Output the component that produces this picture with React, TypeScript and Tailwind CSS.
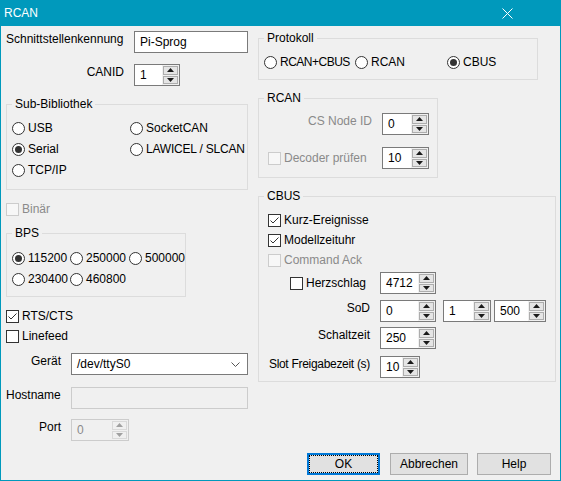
import React from 'react';

const FONT = "font-['Liberation_Sans',Arial,sans-serif]";
const GRAY = 'text-[#8a8a8a]';

type RadioProps = { label: string; checked?: boolean; className?: string; textClass?: string };

const Radio: React.FC<RadioProps> = ({ label, checked, className = '', textClass = '' }) => (
  <div className={`flex items-center gap-[3px] whitespace-nowrap ${className}`}>
    <span className="w-[13px] h-[13px] shrink-0 rounded-full border border-[#333333] bg-white flex items-center justify-center">
      {checked && <span className="w-[7px] h-[7px] rounded-full bg-[#333333]" />}
    </span>
    <span className={textClass}>{label}</span>
  </div>
);

type CheckProps = { label: string; checked?: boolean; disabled?: boolean; className?: string };

const Check: React.FC<CheckProps> = ({ label, checked, disabled, className = '' }) => (
  <div className={`flex items-center gap-[3px] whitespace-nowrap ${className}`}>
    <span
      className={`w-[13px] h-[13px] shrink-0 border flex items-center justify-center ${
        disabled ? 'border-[#cccccc] bg-[#f7f7f7]' : 'border-[#333333] bg-white'
      }`}
    >
      {checked && (
        <svg width="11" height="11" viewBox="0 0 11 11">
          <polyline points="1.5,5.5 4,8 9.5,2.5" fill="none" stroke="#333333" strokeWidth="1" />
        </svg>
      )}
    </span>
    <span className={disabled ? GRAY : ''}>{label}</span>
  </div>
);

const Arrow: React.FC<{ up?: boolean; disabled?: boolean }> = ({ up, disabled }) => (
  <svg width="7" height="4" viewBox="0 0 7 4">
    <polygon
      points={up ? '3.5,0 7,4 0,4' : '0,0 7,0 3.5,4'}
      fill={disabled ? '#a0a0a0' : '#1a1a1a'}
    />
  </svg>
);

type SpinProps = { value: string; className: string; disabled?: boolean };

const Spin: React.FC<SpinProps> = ({ value, className, disabled }) => (
  <div
    className={`h-[22px] flex border ${
      disabled ? 'border-[#cccccc] bg-[#f0f0f0]' : 'border-[#7a7a7a] bg-white'
    } ${className}`}
  >
    <div className={`flex-1 flex items-center pl-[5px] ${disabled ? GRAY : ''}`}>{value}</div>
    <div className="w-[17px] flex flex-col gap-[1px] p-[1px] bg-[#f0f0f0]">
      <div
        className={`flex-1 flex items-center justify-center border ${
          disabled ? 'border-[#d9d9d9] bg-[#f0f0f0]' : 'border-[#adadad] bg-[#e5e5e5]'
        }`}
      >
        <Arrow up disabled={disabled} />
      </div>
      <div
        className={`flex-1 flex items-center justify-center border ${
          disabled ? 'border-[#d9d9d9] bg-[#f0f0f0]' : 'border-[#adadad] bg-[#e5e5e5]'
        }`}
      >
        <Arrow disabled={disabled} />
      </div>
    </div>
  </div>
);

const Group: React.FC<{ title: string; className: string; children: React.ReactNode }> = ({
  title,
  className,
  children,
}) => (
  <fieldset className={`border border-[#dcdcdc] ${className}`}>
    <legend className="ml-[5px] px-[3px] leading-[14px]">{title}</legend>
    {children}
  </fieldset>
);

const Button: React.FC<{ label: string; className: string; focused?: boolean }> = ({
  label,
  className,
  focused,
}) =>
  focused ? (
    <button className={`h-[22px] border-2 border-[#0078d7] bg-[#e1e1e1] p-0 ${className}`}>
      <span className="flex h-full w-full items-center justify-center border border-dotted border-black">
        {label}
      </span>
    </button>
  ) : (
    <button className={`h-[22px] border border-[#adadad] bg-[#e1e1e1] flex items-center justify-center ${className}`}>
      {label}
    </button>
  );

export default function App() {
  return (
    <div
      className={`w-[561px] h-[481px] border border-[#0099bc] bg-[#f0f0f0] text-[12px] leading-[15px] text-black flex flex-col ${FONT}`}
    >
      {/* Title bar */}
      <div className="h-[25px] shrink-0 bg-[#0099bc] flex items-center justify-between pl-[3px] pr-[47px] text-white">
        <span>RCAN</span>
        <svg width="11" height="11" viewBox="0 0 11 11">
          <line x1="0.5" y1="0.5" x2="10.5" y2="10.5" stroke="white" strokeWidth="1" />
          <line x1="10.5" y1="0.5" x2="0.5" y2="10.5" stroke="white" strokeWidth="1" />
        </svg>
      </div>

      <div className="flex-1 flex flex-col pl-[5px] pr-[4px]">
        <div className="flex gap-[10px]">
          {/* Left column */}
          <div className="w-[242px] flex flex-col">
            <div className="mt-[5px] flex items-start justify-between">
              <span className="pt-[1px]">Schnittstellenkennung</span>
              <div className="w-[114px] h-[22px] border border-[#7a7a7a] bg-white flex items-center pl-[5px]">
                Pi-Sprog
              </div>
            </div>

            <div className="mt-[11px] flex items-start">
              <span className="w-[118px] text-right pt-[1px]">CANID</span>
              <Spin value="1" className="ml-[10px] w-[46px]" />
            </div>

            <Group title="Sub-Bibliothek" className="mt-[11px] w-[242px]">
              <div className="flex pt-[7px] pb-[8px] pl-[5px]">
                <div className="w-[118px] flex flex-col">
                  <Radio label="USB" className="h-[21px]" />
                  <Radio label="Serial" checked className="h-[21px]" />
                  <Radio label="TCP/IP" className="h-[21px]" />
                </div>
                <div className="flex flex-col">
                  <Radio label="SocketCAN" className="h-[21px]" />
                  <Radio label="LAWICEL / SLCAN" className="h-[21px]" textClass="tracking-[-0.2px]" />
                </div>
              </div>
            </Group>

            <Check label="Binär" disabled className="mt-[12px] h-[14px]" />

            <Group title="BPS" className="mt-[10px] w-[180px]">
              <div className="flex flex-col pt-[8px] pb-[6px] pl-[5px]">
                <div className="flex h-[21px]">
                  <Radio label="115200" checked className="w-[58px]" />
                  <Radio label="250000" className="w-[59px]" />
                  <Radio label="500000" />
                </div>
                <div className="flex h-[21px]">
                  <Radio label="230400" className="w-[58px]" />
                  <Radio label="460800" />
                </div>
              </div>
            </Group>

            <Check label="RTS/CTS" checked className="mt-[12px] h-[14px]" />
            <Check label="Linefeed" className="mt-[6px] h-[14px]" />

            <div className="mt-[10px] flex items-start">
              <span className="w-[55px] text-right pt-[1px]">Gerät</span>
              <div className="ml-[10px] w-[177px] h-[22px] border border-[#7a7a7a] bg-white flex items-center justify-between pl-[5px] pr-[7px]">
                <span>/dev/ttyS0</span>
                <svg width="9" height="5" viewBox="0 0 9 5">
                  <polyline points="0.5,0.5 4.5,4.5 8.5,0.5" fill="none" stroke="#555555" strokeWidth="1" />
                </svg>
              </div>
            </div>

            <div className="mt-[12px] flex items-start">
              <span className="w-[65px] pt-[1px]">Hostname</span>
              <div className="w-[177px] h-[22px] border border-[#cccccc] bg-[#f0f0f0]" />
            </div>

            <div className="mt-[10px] flex items-start">
              <span className="w-[55px] text-right pt-[1px]">Port</span>
              <Spin value="0" disabled className="ml-[10px] w-[58px]" />
            </div>
          </div>

          {/* Right column */}
          <div className="w-[298px] flex flex-col">
            <Group title="Protokoll" className="mt-[5px] w-[280px]">
              <div className="flex h-[21px] mt-[7px] mb-[6px] pl-[5px]">
                <Radio label="RCAN+CBUS" className="w-[91px]" textClass="tracking-[-0.5px]" />
                <Radio label="RCAN" className="w-[92px]" />
                <Radio label="CBUS" checked />
              </div>
            </Group>

            <Group title="RCAN" className="mt-[11px] w-[180px]">
              <div className="flex flex-col pt-[8px] pb-[8px] pl-[9px]">
                <div className="flex items-start">
                  <span className={`w-[104px] text-right pt-[1px] ${GRAY}`}>CS Node ID</span>
                  <Spin value="0" className="ml-[10px] w-[47px]" />
                </div>
                <div className="mt-[12px] flex items-center">
                  <Check label="Decoder prüfen" disabled className="w-[104px]" />
                  <Spin value="10" className="ml-[10px] w-[47px]" />
                </div>
              </div>
            </Group>

            <Group title="CBUS" className="mt-[11px] w-[298px]">
              <div className="flex flex-col pt-[7px] pb-[3px] pl-[9px]">
                <Check label="Kurz-Ereignisse" checked className="h-[20px]" />
                <Check label="Modellzeituhr" checked className="h-[20px]" />
                <Check label="Command Ack" disabled className="h-[20px]" />

                <div className="mt-[2px] flex items-center">
                  <Check label="Herzschlag" className="w-[102px] pl-[22px]" />
                  <Spin value="4712" className="ml-[10px] w-[56px]" />
                </div>

                <div className="mt-[6px] flex items-start">
                  <span className="w-[102px] text-right pt-[1px]">SoD</span>
                  <Spin value="0" className="ml-[10px] w-[56px]" />
                  <Spin value="1" className="ml-[7px] w-[48px]" />
                  <Spin value="500" className="ml-[3px] w-[52px]" />
                </div>

                <div className="mt-[5px] flex items-start">
                  <span className="w-[102px] text-right pt-[1px]">Schaltzeit</span>
                  <Spin value="250" className="ml-[10px] w-[56px]" />
                </div>

                <div className="mt-[7px] flex items-start">
                  <span className="w-[102px] text-right pt-[1px] whitespace-nowrap tracking-[-0.3px]">
                    Slot Freigabezeit (s)
                  </span>
                  <Spin value="10" className="ml-[10px] w-[40px]" />
                </div>
              </div>
            </Group>
          </div>
        </div>

        {/* Buttons */}
        <div className="mt-[12px] flex justify-end pr-[5px]">
          <Button label="OK" focused className="w-[73px]" />
          <Button label="Abbrechen" className="ml-[10px] w-[78px]" />
          <Button label="Help" className="ml-[9px] w-[74px]" />
        </div>
      </div>
    </div>
  );
}
